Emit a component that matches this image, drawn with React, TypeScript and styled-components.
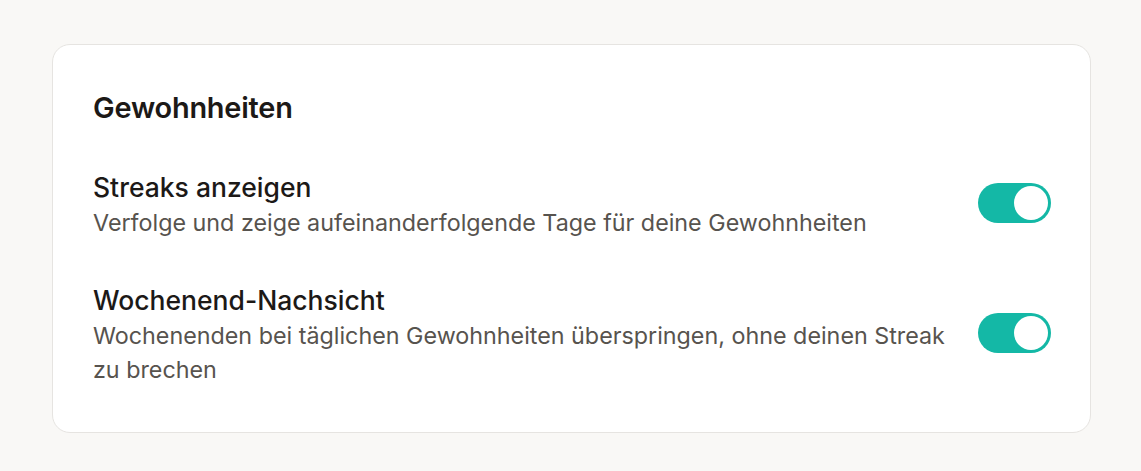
import { useState } from "react";
import styled, { createGlobalStyle } from "styled-components";

const GlobalStyle = createGlobalStyle`
  html, body {
    margin: 0;
    padding: 0;
    background: #f9f8f6;
  }
  body {
    font-family: Inter, "Noto Sans", "Liberation Sans", sans-serif;
    -webkit-font-smoothing: antialiased;
  }
`

const Page = styled.div`
  padding: 44px 50px 37px 52px;
`

const Card = styled.section`
  background: #fff;
  border: 1px solid #e6e4e1;
  border-radius: 18px;
  padding: 45px 39px 45px 40px;
`

const Heading = styled.h2`
  margin: 0 0 44px;
  font-size: 28.9px;
  line-height: 36px;
  font-weight: 600;
  color: #1c1917;
  letter-spacing: -0.2px;
`

const List = styled.div`
  display: flex;
  flex-direction: column;
  gap: 43px;
`

const Row = styled.div`
  display: flex;
  align-items: center;
  justify-content: space-between;
  gap: 32px;
`

const Text = styled.div`
  flex: 1;
  min-width: 0;
`

const Title = styled.div`
  font-size: 26.5px;
  line-height: 34px;
  font-weight: 500;
  color: #1c1917;
`

const Description = styled.div`
  margin-top: 2px;
  font-size: 23.3px;
  line-height: 34px;
  color: #57534e;
`

const Track = styled.button<{ $on: boolean }>`
  flex: none;
  width: 73px;
  height: 40px;
  border: none;
  border-radius: 20px;
  padding: 3px;
  margin-top: -5px;
  background: ${p => (p.$on ? "#14b8a6" : "#d6d3d1")};
  display: flex;
  justify-content: ${p => (p.$on ? "flex-end" : "flex-start")};
  cursor: pointer;
`

const Knob = styled.span`
  width: 34px;
  height: 34px;
  border-radius: 50%;
  background: #fff;
`

const Toggle = ({ on, onChange }: { on: boolean; onChange: () => void }) => (
  <Track $on={on} onClick={onChange} role="switch" aria-checked={on}>
    <Knob />
  </Track>
)

const App = () => {
  const [streaks, setStreaks] = useState(true);
  const [weekend, setWeekend] = useState(true);

  return (
    <>
      <GlobalStyle />
      <Page>
        <Card>
          <Heading>Gewohnheiten</Heading>
          <List>
            <Row>
              <Text>
                <Title>Streaks anzeigen</Title>
                <Description>Verfolge und zeige aufeinanderfolgende Tage für deine Gewohnheiten</Description>
              </Text>
              <Toggle on={streaks} onChange={() => setStreaks(!streaks)} />
            </Row>
            <Row>
              <Text>
                <Title>Wochenend-Nachsicht</Title>
                <Description>Wochenenden bei täglichen Gewohnheiten überspringen, ohne deinen Streak zu brechen</Description>
              </Text>
              <Toggle on={weekend} onChange={() => setWeekend(!weekend)} />
            </Row>
          </List>
        </Card>
      </Page>
    </>
  );
}

export default App;
